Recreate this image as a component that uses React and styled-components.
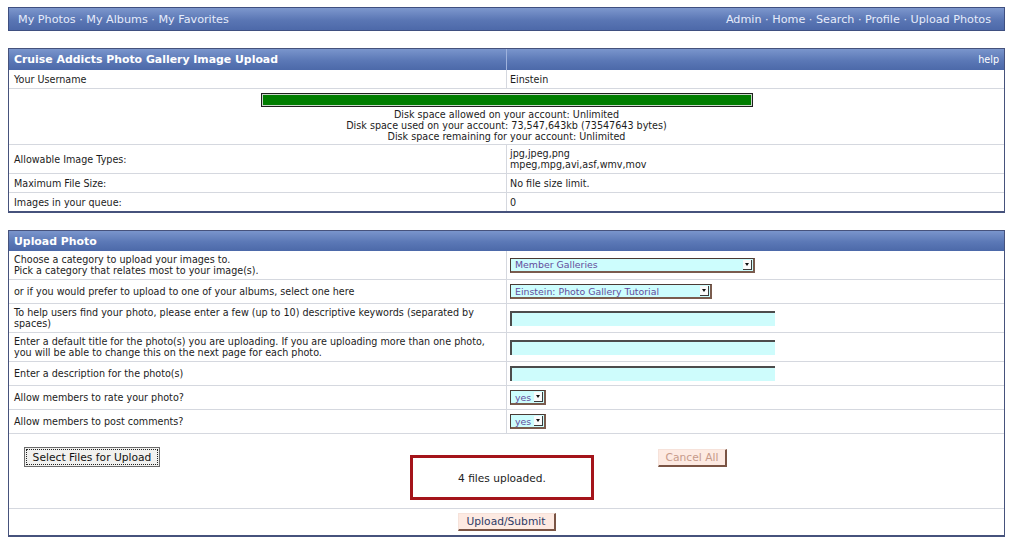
import React from 'react';
import styled, { createGlobalStyle } from 'styled-components';

const GlobalStyle = createGlobalStyle`
  body {
    margin: 0;
    background: #fff;
    font-family: "DejaVu Sans", Verdana, sans-serif;
    font-size: 9.6px;
    color: #1c1c1c;
  }
`;

export default function App() {
  return (
    <>
      <GlobalStyle />
      <Page>
        <NavBar>
          <NavLinks>My Photos · My Albums · My Favorites</NavLinks>
          <NavLinks>Admin · Home · Search · Profile · Upload Photos</NavLinks>
        </NavBar>

        <Panel>
          <HeadRow $split $h={21}>
            <HeadCell $bold $divider>Cruise Addicts Photo Gallery Image Upload</HeadCell>
            <HeadCell $right>help</HeadCell>
          </HeadRow>
          <Row>
            <Label>Your Username</Label>
            <Value>Einstein</Value>
          </Row>
          <FullRow>
            <DiskBar><DiskFill /></DiskBar>
            <DiskText>
              Disk space allowed on your account: Unlimited<br />
              Disk space used on your account: 73,547,643kb (73547643 bytes)<br />
              Disk space remaining for your account: Unlimited
            </DiskText>
          </FullRow>
          <Row>
            <Label>Allowable Image Types:</Label>
            <Value>jpg,jpeg,png<br />mpeg,mpg,avi,asf,wmv,mov</Value>
          </Row>
          <Row>
            <Label>Maximum File Size:</Label>
            <Value>No file size limit.</Value>
          </Row>
          <Row $last>
            <Label>Images in your queue:</Label>
            <Value>0</Value>
          </Row>
        </Panel>

        <Panel>
          <HeadRow $h={20}>
            <HeadCell $bold>Upload Photo</HeadCell>
          </HeadRow>
          <Row>
            <Label>Choose a category to upload your images to.<br />Pick a category that relates most to your image(s).</Label>
            <Value>
              <Select $w={245}><SelectText>Member Galleries</SelectText><Arrow /></Select>
            </Value>
          </Row>
          <Row>
            <Label>or if you would prefer to upload to one of your albums, select one here</Label>
            <Value>
              <Select $w={202}><SelectText>Einstein: Photo Gallery Tutorial</SelectText><Arrow /></Select>
            </Value>
          </Row>
          <Row>
            <Label>To help users find your photo, please enter a few (up to 10) descriptive keywords (separated by spaces)</Label>
            <Value><TextInput /></Value>
          </Row>
          <Row>
            <Label>Enter a default title for the photo(s) you are uploading. If you are uploading more than one photo, you will be able to change this on the next page for each photo.</Label>
            <Value><TextInput /></Value>
          </Row>
          <Row>
            <Label>Enter a description for the photo(s)</Label>
            <Value><TextInput /></Value>
          </Row>
          <Row>
            <Label>Allow members to rate your photo?</Label>
            <Value>
              <Select $w={36}><SelectText>yes</SelectText><Arrow /></Select>
            </Value>
          </Row>
          <Row>
            <Label>Allow members to post comments?</Label>
            <Value>
              <Select $w={36}><SelectText>yes</SelectText><Arrow /></Select>
            </Value>
          </Row>
          <UploadArea>
            <FileButton>Select Files for Upload</FileButton>
            <StatusBox>4 files uploaded.</StatusBox>
            <PinkButton $muted $w={69}>Cancel All</PinkButton>
          </UploadArea>
          <SubmitRow>
            <PinkButton $w={98}>Upload/Submit</PinkButton>
          </SubmitRow>
        </Panel>
      </Page>
    </>
  );
}

const Page = styled.div`
  width: 997px;
  padding: 7px 0 0 8px;
  display: flex;
  flex-direction: column;
  gap: 17px;
`;

const NavBar = styled.div`
  height: 22px;
  border: 1px solid #3f4f80;
  background: linear-gradient(#7d97cd, #5a76b4 55%, #4d69a9);
  display: flex;
  justify-content: space-between;
  align-items: center;
  padding: 0 13px 0 9px;
`;

const NavLinks = styled.span`
  font-size: 11.2px;
  color: #e6ecfb;
  white-space: nowrap;
`;

const Panel = styled.div`
  border: 1px solid #46527c;
  border-bottom-width: 2px;
  background: #fff;
`;

const HeadRow = styled.div`
  display: grid;
  grid-template-columns: ${p => (p.$split ? '498px 1fr' : '1fr')};
  height: ${p => p.$h}px;
  background: linear-gradient(#7a95cc, #5b78b6 55%, #4c69a9);
`;

const HeadCell = styled.div`
  display: flex;
  align-items: center;
  justify-content: ${p => (p.$right ? 'flex-end' : 'flex-start')};
  padding: 0 5px;
  color: #fff;
  font-size: ${p => (p.$bold ? '10.9px' : '9.6px')};
  font-weight: ${p => (p.$bold ? 'bold' : 'normal')};
  border-right: ${p => (p.$divider ? '1px solid #9fb2dc' : 'none')};
`;

const Row = styled.div`
  display: grid;
  grid-template-columns: 498px 1fr;
  min-height: 18px;
  border-bottom: ${p => (p.$last ? 'none' : '1px solid #d5d8df')};
`;

const Label = styled.div`
  display: flex;
  align-items: center;
  padding: 3px 5px;
  line-height: 11px;
  border-right: 1px solid #d5d8df;
`;

const Value = styled.div`
  display: flex;
  flex-direction: column;
  justify-content: center;
  align-items: flex-start;
  padding: 3px 3px;
  line-height: 11px;
`;

const FullRow = styled.div`
  display: flex;
  flex-direction: column;
  align-items: center;
  padding: 4px 0 2px;
  border-bottom: 1px solid #d5d8df;
`;

const DiskBar = styled.div`
  width: 492px;
  height: 14px;
  box-sizing: border-box;
  border: 1px solid #1e1e1e;
  padding: 1px;
  background: #c9d6c9;
  display: flex;
`;

const DiskFill = styled.div`
  flex: 1;
  background: #007d00;
`;

const DiskText = styled.div`
  margin-top: 2px;
  text-align: center;
  line-height: 11px;
`;

const Select = styled.div`
  width: ${p => p.$w}px;
  height: 15px;
  margin: 1px 0;
  box-sizing: border-box;
  display: flex;
  align-items: center;
  background: #cdfdfd;
  border-top: 1px solid #4a3a34;
  border-left: 1px solid #4a3a34;
  border-right: 2px solid #7a5c4e;
  border-bottom: 2px solid #7a5c4e;
  padding-left: 4px;
  color: #634c9c;
  font-size: 9.4px;
`;

const SelectText = styled.span`
  flex: 1;
  white-space: nowrap;
  overflow: hidden;
`;

const Arrow = styled.span`
  width: 9px;
  height: 10px;
  margin-right: 1px;
  box-sizing: border-box;
  background: #fbfbfb;
  border-right: 1px solid #3a3a3a;
  border-bottom: 1px solid #3a3a3a;
  display: flex;
  align-items: center;
  justify-content: center;
  &::after {
    content: '';
    border-left: 2.5px solid transparent;
    border-right: 2.5px solid transparent;
    border-top: 3px solid #111;
  }
`;

const TextInput = styled.div`
  width: 265px;
  height: 15px;
  margin: 1px 0;
  box-sizing: border-box;
  background: #cefcfc;
  border-top: 2px solid #4c4c4c;
  border-left: 2px solid #4c4c4c;
`;

const UploadArea = styled.div`
  height: 75px;
  box-sizing: border-box;
  display: flex;
  align-items: flex-start;
  padding: 13px 0 0 15px;
  border-bottom: 1px solid #d5d8df;
`;

const FileButton = styled.div`
  width: 136px;
  height: 20px;
  box-sizing: border-box;
  display: flex;
  align-items: center;
  justify-content: center;
  background: #f1f1ef;
  border: 1px solid #6a6a6a;
  outline: 1px dotted #222;
  outline-offset: -3px;
  font-size: 10.7px;
  color: #111;
  margin-right: 250px;
`;

const StatusBox = styled.div`
  width: 184px;
  height: 45px;
  box-sizing: border-box;
  margin-top: 8px;
  border: 3px solid #a4141a;
  display: flex;
  align-items: center;
  justify-content: center;
  font-size: 10.6px;
  color: #222;
`;

const PinkButton = styled.div`
  width: ${p => p.$w}px;
  height: 18px;
  box-sizing: border-box;
  display: flex;
  align-items: center;
  justify-content: center;
  background: #fdeae2;
  border-top: 1px solid #f6e2da;
  border-left: 1px solid #f6e2da;
  border-right: 2px solid #7a5444;
  border-bottom: 2px solid #7a5444;
  font-size: 10.7px;
  color: ${p => (p.$muted ? '#c79a8a' : '#2e3a66')};
  margin: ${p => (p.$muted ? '2px 0 0 64px' : '0')};
`;

const SubmitRow = styled.div`
  display: flex;
  justify-content: center;
  padding: 4px 0 4px;
`;
